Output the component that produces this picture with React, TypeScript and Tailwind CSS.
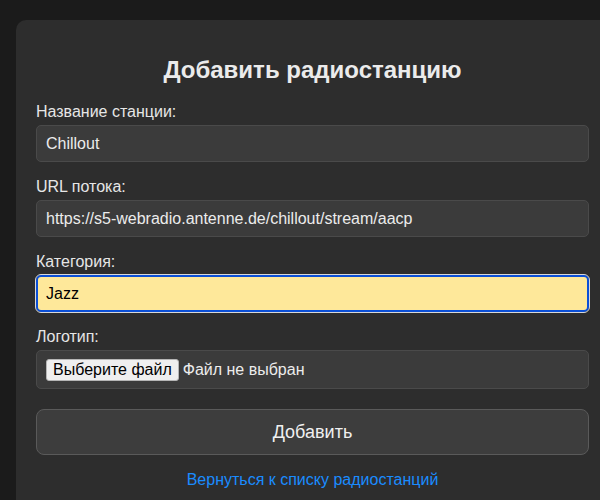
import React from 'react';

const font = { fontFamily: '"Liberation Sans", Arial, sans-serif' };

const Field: React.FC<{ label: string; children: React.ReactNode }> = ({ label, children }) => (
  <div className="mb-4 flex flex-col">
    <label className="mb-[4px] text-[16px] leading-[18px] text-[#e6e6e6]">{label}</label>
    {children}
  </div>
);

const inputCls =
  'h-[37px] w-full rounded-[5px] border border-[#4a4a4a] bg-[#3b3b3b] px-[9px] text-[16px] text-[#ececec] outline-none';

const App: React.FC = () => {
  return (
    <div className="h-[500px] w-[600px] overflow-hidden bg-[#1b1b1b] pt-5" style={font}>
      <div className="ml-4 w-[593px] rounded-[10px] bg-[#2d2d2d] px-5 pt-5 pb-6">
        <h2 className="mt-4 mb-[19px] text-center text-[24px] font-bold leading-[28px] text-[#ebebeb]">
          Добавить радиостанцию
        </h2>

        <Field label="Название станции:">
          <input className={inputCls} defaultValue="Chillout" />
        </Field>

        <Field label="URL потока:">
          <input className={inputCls} defaultValue="https://s5-webradio.antenne.de/chillout/stream/aacp" />
        </Field>

        <Field label="Категория:">
          <input
            className="h-[37px] w-full rounded-[5px] border-2 border-[#0b4fd6] bg-[#fee89a] px-[8px] text-[16px] text-black outline outline-1 outline-[#d8d8d8] outline-offset-0"
            defaultValue="Jazz"
          />
        </Field>

        <Field label="Логотип:">
          <div className="flex h-[39px] w-full items-center rounded-[5px] border border-[#4a4a4a] bg-[#3b3b3b] px-[9px] text-[16px]">
            <span className="rounded-[3px] border border-[#b5b5b5] bg-[#efefef] px-[6px] leading-[20px] text-black">
              Выберите файл
            </span>
            <span className="ml-[4px] text-[#ececec]">Файл не выбран</span>
          </div>
        </Field>

        <button className="mt-[4px] h-[46px] w-full rounded-[8px] border border-[#5a5a5a] bg-[#3d3d3d] text-[18px] text-[#f0f0f0]">
          Добавить
        </button>

        <div className="mt-4 text-center text-[16px] leading-[18px]">
          <a href="#" className="text-[#1a8cff]">
            Вернуться к списку радиостанций
          </a>
        </div>
      </div>
    </div>
  );
};

export default App;
